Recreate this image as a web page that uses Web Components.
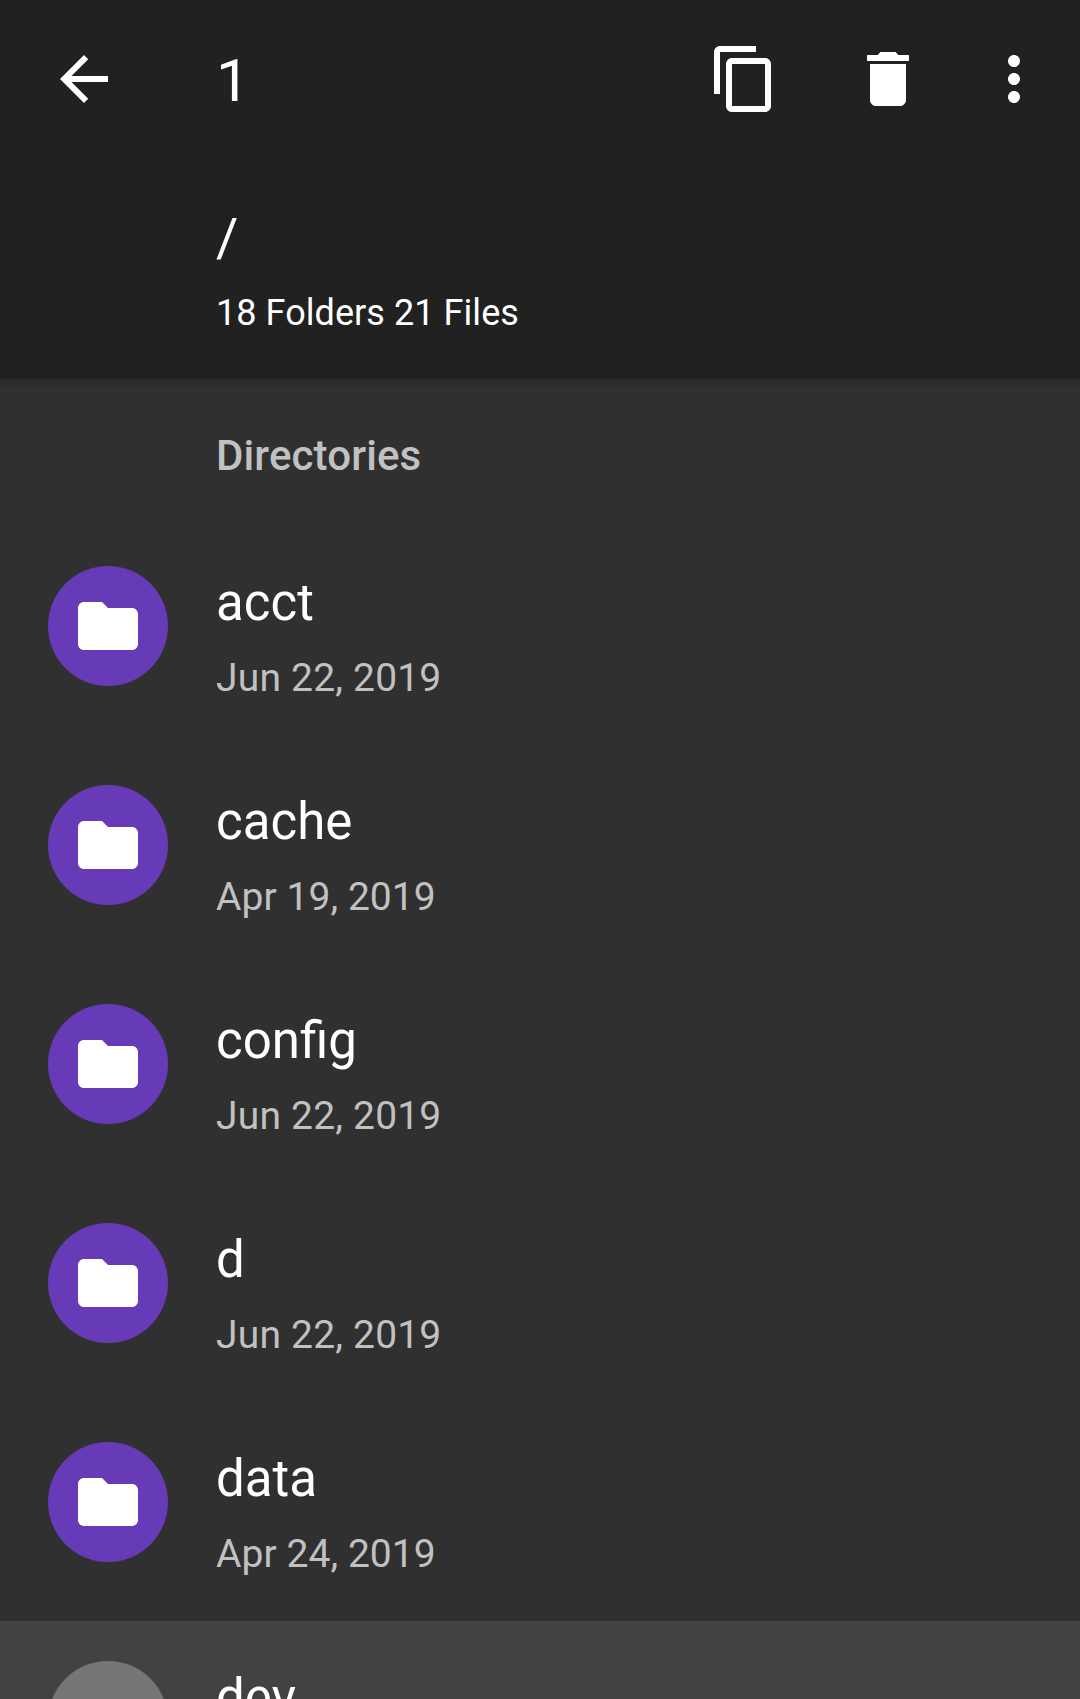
<!DOCTYPE html>
<html lang="en"><head><meta charset="utf-8"><title>Files</title>
<style>body{margin:0;background:#303030}</style></head>
<body>
<file-browser></file-browser>
<script>
const define=(name,html)=>customElements.define(name,class extends HTMLElement{
  constructor(){super();const t=document.createElement('template');t.innerHTML=html;this.attachShadow({mode:'open'}).append(t.content.cloneNode(true));}
});
define('app-header',`<style>
:host{display:flex;flex-direction:column;height:379px;background:#212121}
nav{display:flex;align-items:center;height:158px;box-sizing:border-box}
svg{display:block;flex:none;fill:#fff}
.count{font-size:60px;line-height:70px;margin-left:96px;padding-top:4px;flex:1}
.info{padding-left:216px}
.path{font-size:54px;line-height:60px;margin-top:50px}
.sum{font-size:36px;line-height:44px;margin-top:23px;letter-spacing:.06px}
</style>
<nav>
<svg style="margin-left:48px" width="72" height="72" viewBox="0 0 24 24"><path d="M20 11H7.83l5.59-5.59L12 4l-8 8 8 8 1.41-1.41L7.83 13H20v-2z"/></svg>
<span class="count">1</span>
<svg style="margin-right:72px" width="72" height="72" viewBox="0 0 24 24"><path d="M16 1H4c-1.1 0-2 .9-2 2v14h2V3h12V1zm3 4H8c-1.1 0-2 .9-2 2v14c0 1.1.9 2 2 2h11c1.1 0 2-.9 2-2V7c0-1.1-.9-2-2-2zm0 16H8V7h11v14z"/></svg>
<svg style="margin-right:54px" width="72" height="72" viewBox="0 0 24 24"><path d="M6 19c0 1.1.9 2 2 2h8c1.1 0 2-.9 2-2V7H6v12zM19 4h-3.500l-1-1h-5l-1 1H5v2h14V4z"/></svg>
<svg style="margin-right:30px" width="72" height="72" viewBox="0 0 24 24"><path d="M12 8c1.1 0 2-.9 2-2s-.9-2-2-2-2 .9-2 2 .9 2 2 2zm0 2c-1.1 0-2 .9-2 2s.9 2 2 2 2-.9 2-2-.9-2-2-2zm0 6c-1.1 0-2 .9-2 2s.9 2 2 2 2-.9 2-2-.9-2-2-2z"/></svg>
</nav>
<div class="info"><div class="path">/</div><div class="sum">18 Folders 21 Files</div></div>`);
define('section-title',`<style>:host{display:block;height:137px;padding:53px 0 0 216px;box-sizing:border-box;font-size:42px;line-height:48px;font-weight:500;letter-spacing:.12px;color:#c1c1c1;background:linear-gradient(#292929,#2d2d2d 5px,#303030 13px)}</style><slot></slot>`);
define('file-row',`<style>
:host{display:flex;height:219px;box-sizing:border-box;padding:50px 0 0 48px}
:host([selected]){background:#424242;margin-top:10px;padding-top:40px}
.badge{display:flex;align-items:center;justify-content:center;width:120px;height:120px;border-radius:50%;background:#673ab7;flex:none}
:host([selected]) .badge{background:#757575}
svg{display:block;fill:#fff}
.check,:host([selected]) .folder{display:none}
:host([selected]) .check{display:block}
.text{margin-left:48px;display:flex;flex-direction:column}
.name{font-size:51px;line-height:60px;color:#fff;margin-top:7px}
.date{font-size:39px;line-height:46px;color:#c1c1c1;margin-top:22px;letter-spacing:.06px}
:host([wide]) .date{letter-spacing:.2px}
</style><div class="badge"><svg class="folder" width="72" height="72" viewBox="0 0 24 24"><path d="M10 4H4c-1.1 0-1.990.9-1.990 2L2 18c0 1.1.9 2 2 2h16c1.1 0 2-.9 2-2V8c0-1.1-.9-2-2-2h-8l-2-2z"/></svg><svg class="check" width="72" height="72" viewBox="0 0 24 24"><path d="M9 16.170L4.830 12l-1.420 1.410L9 19 21 7l-1.410-1.410z"/></svg></div>
<div class="text"><div class="name"><slot></slot></div><div class="date"><slot name="date"></slot></div></div>`);
define('file-browser',`<style>:host{display:block;width:1080px;height:1699px;overflow:hidden;background:#303030;color:#fff;font-family:Roboto,sans-serif}</style>
<app-header></app-header><section-title>Directories</section-title>
<file-row wide>acct<span slot="date">Jun 22, 2019</span></file-row>
<file-row>cache<span slot="date">Apr 19, 2019</span></file-row>
<file-row wide>config<span slot="date">Jun 22, 2019</span></file-row>
<file-row wide>d<span slot="date">Jun 22, 2019</span></file-row>
<file-row>data<span slot="date">Apr 24, 2019</span></file-row>
<file-row selected>dev</file-row>`);
</script></body></html>
